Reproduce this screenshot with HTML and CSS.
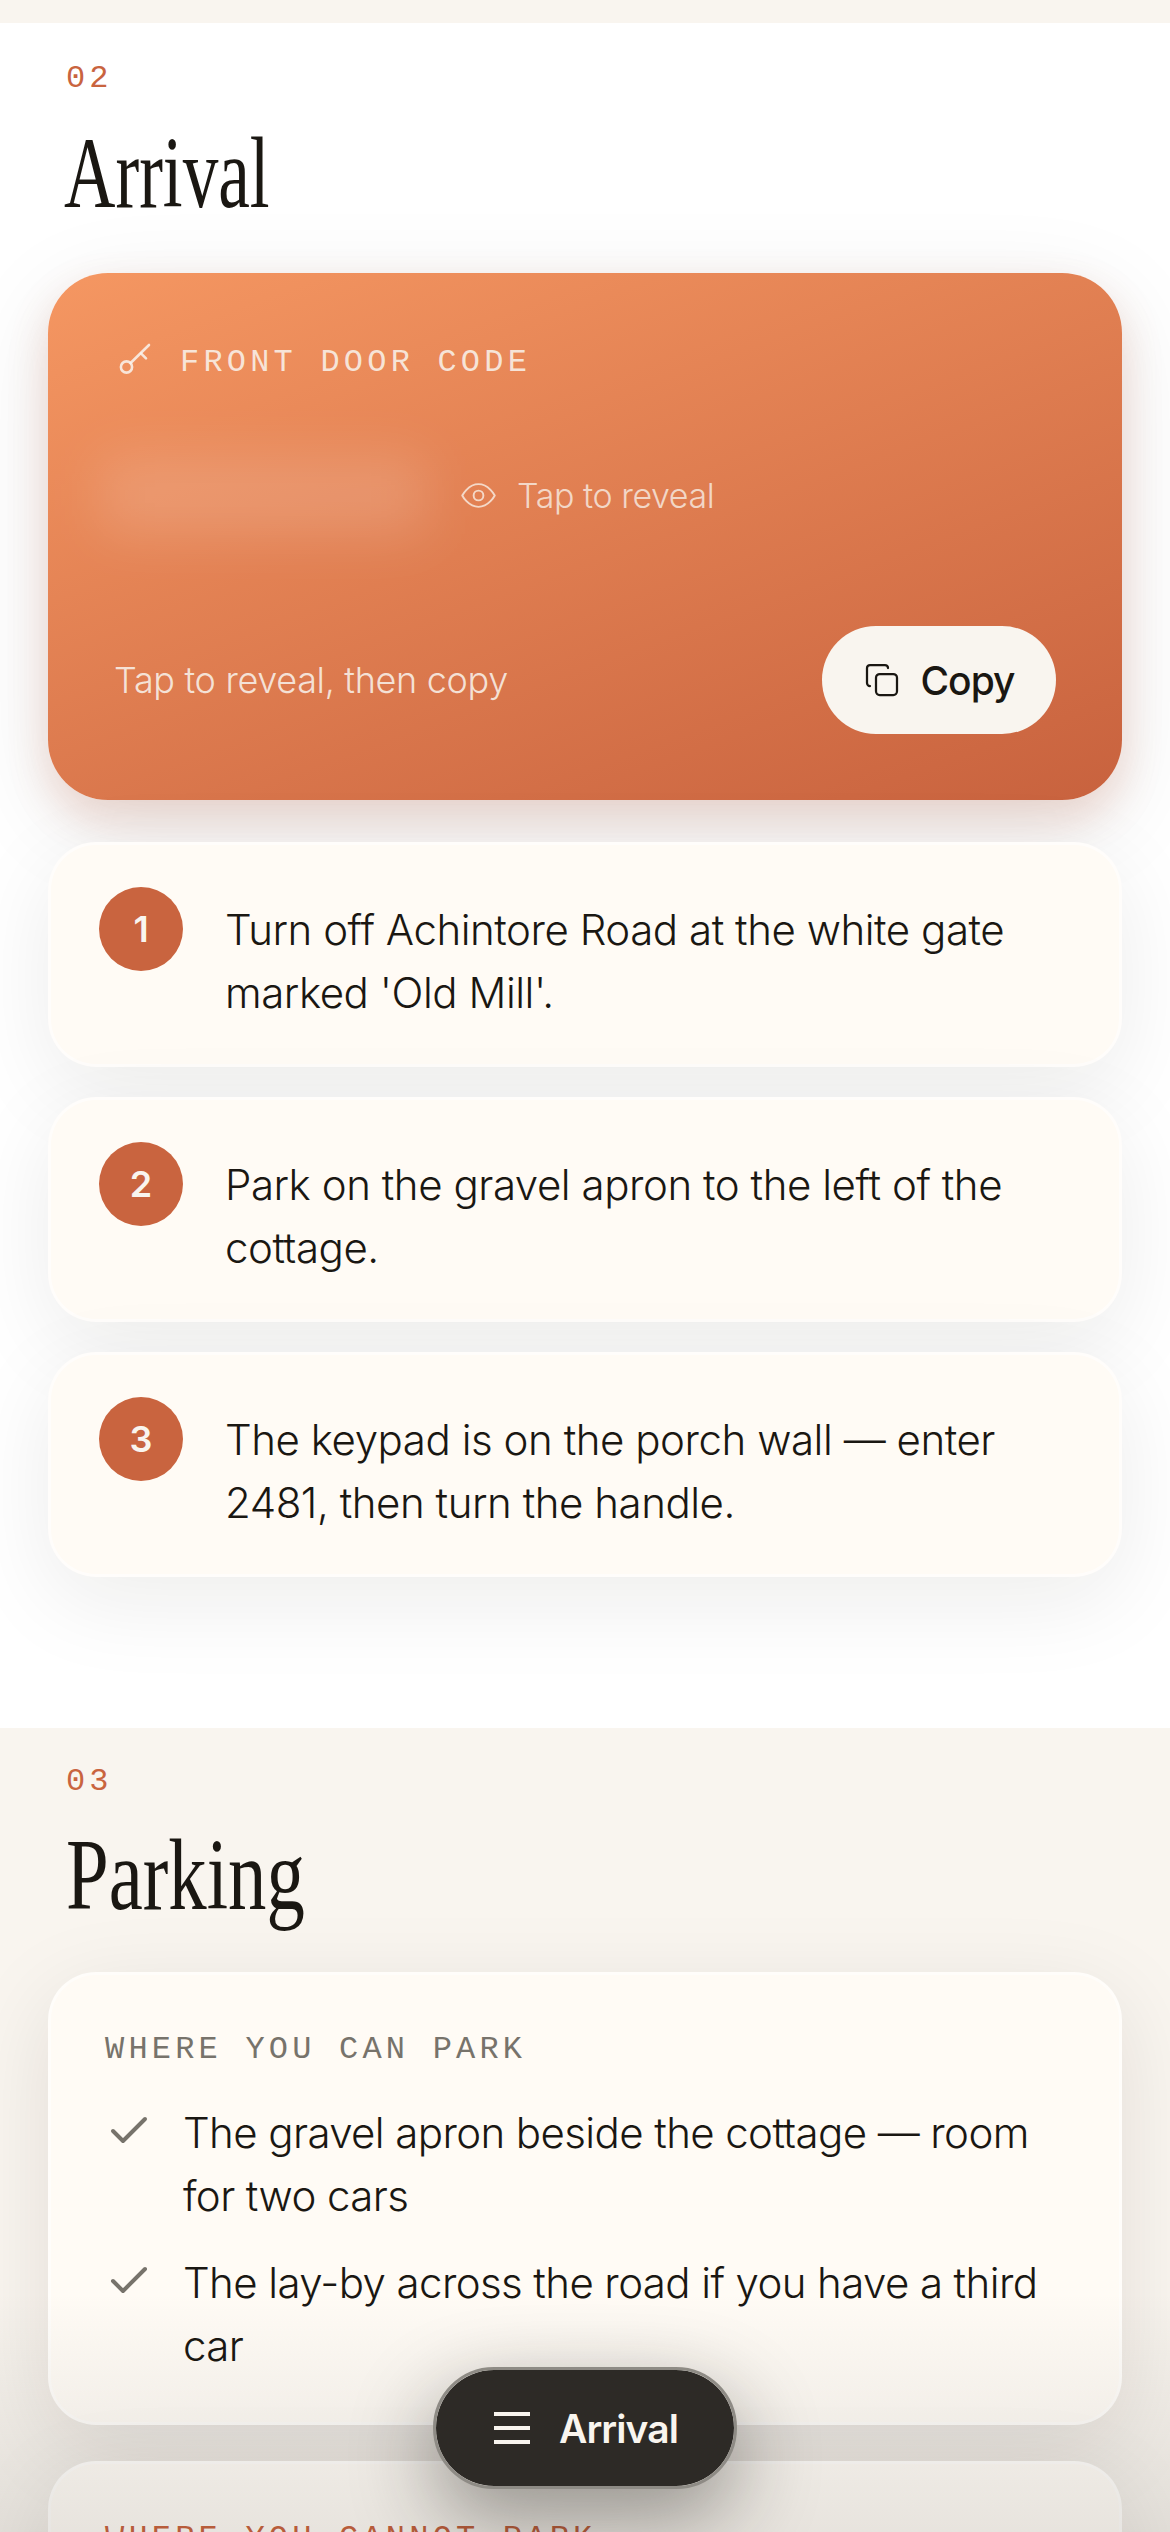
FILE: index.html
```html
<!DOCTYPE html>
<html lang="en">
<head>
<meta charset="utf-8">
<title>Arrival</title>
<link rel="stylesheet" href="styles.css">
</head>
<body>
<div class="page">
  <div class="topband"></div>
  <section class="section section-white">
    <div class="num">02</div>
    <h2 class="title title-arrival">Arrival</h2>
    <div class="hero">
      <div class="hero-label">
        <svg class="key" viewBox="0 0 36 36" fill="none" stroke="currentColor" stroke-width="2.6" stroke-linecap="round"><circle cx="9.500" cy="26" r="5.600"/><path d="M13.600 22 32 4"/><path d="M24 12.400l5 5"/></svg>
        <span>FRONT DOOR CODE</span>
      </div>
      <div class="code-row">
        <div class="code-blur"></div>
        <div class="reveal">
          <svg class="eye" viewBox="0 0 24 24" fill="none" stroke="currentColor" stroke-width="1.2" stroke-linecap="round" stroke-linejoin="round"><path d="M2 12s3.600-7 10-7 10 7 10 7-3.600 7-10 7-10-7-10-7Z"/><circle cx="12" cy="12" r="3"/></svg>
          <span>Tap to reveal</span>
        </div>
      </div>
      <div class="hero-foot">
        <span class="hint">Tap to reveal, then copy</span>
        <button class="copy">
          <svg class="copy-icon" viewBox="0 0 24 24" fill="none" stroke="currentColor" stroke-width="1.5" stroke-linecap="round" stroke-linejoin="round"><rect x="8" y="8" width="14" height="14" rx="2.500"/><path d="M4 16c-1.100 0-2-.9-2-2V4c0-1.100.9-2 2-2h10c1.100 0 2 .9 2 2"/></svg>
          <span>Copy</span>
        </button>
      </div>
    </div>
    <ol class="steps">
      <li class="step"><span class="badge">1</span><p>Turn off Achintore Road at the white gate marked 'Old Mill'.</p></li>
      <li class="step"><span class="badge">2</span><p>Park on the gravel apron to the left of the cottage.</p></li>
      <li class="step"><span class="badge">3</span><p>The keypad is on the porch wall — enter 2481, then turn the handle.</p></li>
    </ol>
  </section>
  <section class="section section-cream">
    <div class="num num-parking">03</div>
    <h2 class="title title-parking">Parking</h2>
    <div class="panel">
      <div class="panel-label">WHERE YOU CAN PARK</div>
      <ul class="checks">
        <li><svg class="check" viewBox="0 0 24 24" fill="none" stroke="currentColor" stroke-width="2" stroke-linecap="round" stroke-linejoin="round"><path d="M20 6 9 17l-5-5"/></svg><span>The gravel apron beside the cottage — room for two cars</span></li>
        <li><svg class="check" viewBox="0 0 24 24" fill="none" stroke="currentColor" stroke-width="2" stroke-linecap="round" stroke-linejoin="round"><path d="M20 6 9 17l-5-5"/></svg><span>The lay-by across the road if you have a third car</span></li>
      </ul>
    </div>
    <div class="panel panel-next">
      <div class="panel-label panel-label-warn">WHERE YOU CANNOT PARK</div>
    </div>
  </section>
  <div class="scrim"></div>
  <button class="pill">
    <svg class="menu" viewBox="0 0 36 36" fill="none" stroke="currentColor" stroke-width="4"><path d="M0 4h36M0 18h36M0 32h36"/></svg>
    <span>Arrival</span>
  </button>
</div>
</body>
</html>
```
FILE: styles.css
```css
* { box-sizing: border-box; }
html, body { margin: 0; padding: 0; background: #fff; }
body { font-family: Inter, "Noto Sans", sans-serif; color: #1a1712; }
.page { position: relative; width: 1170px; height: 2532px; overflow: hidden; }
.topband { height: 23px; background: #f9f5ef; }
.section { padding: 0 48px; }
.section-white { background: #fff; padding-bottom: 151px; }
.section-cream { background: #f9f5ef; padding-bottom: 60px; }
.num { font-family: "Liberation Mono", monospace; font-size: 32px; line-height: 45px; letter-spacing: 4px; color: #c9643f; padding: 33px 0 0 18px; }
.num-parking { padding-top: 31px; margin-bottom: 2px; }
.title { margin: 0 0 0 16px; font-family: "Liberation Serif", serif; font-weight: 400; font-size: 101px; line-height: 120px; height: 120px; margin-top: 12px; transform-origin: left center; color: #1a1712; white-space: nowrap; }
.title-arrival { transform: scaleX(.705); margin-bottom: 40px; }
.title-parking { transform: scaleX(.76); margin-left: 18px; margin-top: 11px; margin-bottom: 37px; }
.hero { height: 527px; border-radius: 60px; padding: 66px; background: linear-gradient(160deg, #f59762 0%, #c8623e 100%); box-shadow: 0 18px 42px rgba(201, 100, 63, .2), 0 24px 96px rgba(26, 23, 18, .1); display: flex; flex-direction: column; color: #f9f5ef; }
.hero-label { display: flex; align-items: center; gap: 27px; height: 45px; font-family: "Liberation Mono", monospace; font-size: 32px; letter-spacing: 4.2px; color: rgba(249, 245, 239, .85); margin-left: 3px; padding-top: 1px; }
.key { width: 36px; height: 36px; flex: none; margin-top: -6px; }
.code-row { display: flex; align-items: center; margin-top: 45px; height: 132px; }
.code-blur { width: 326px; height: 78px; margin-left: -14px; background: rgba(255, 255, 255, .15); filter: blur(27px); flex: none; margin-right: 33px; }
.reveal { display: flex; align-items: center; gap: 19px; font-size: 34px; letter-spacing: -.45px; font-weight: 300; color: rgba(249, 245, 239, .75); }
.eye { width: 39px; height: 39px; flex: none; }
.hero-foot { margin-top: auto; display: flex; align-items: center; justify-content: space-between; }
.hint { font-size: 36px; letter-spacing: -.33px; font-weight: 300; color: rgba(249, 245, 239, .85); }
.copy { height: 108px; width: 234px; border: 0; border-radius: 54px; background: #f9f5ef; color: #1a1712; display: flex; align-items: center; justify-content: center; gap: 21px; font-family: inherit; font-size: 39px; letter-spacing: -1px; font-weight: 500; padding: 0; }
.copy-icon { width: 36px; height: 36px; flex: none; }
.steps { list-style: none; margin: 42px 0 0; padding: 0; display: flex; flex-direction: column; gap: 30px; }
.step { display: flex; align-items: flex-start; gap: 42px; padding: 42px 48px 40px; background: #fffbf5; border: 3px solid rgba(255, 255, 255, .6); border-radius: 48px; box-shadow: 0 24px 90px rgba(26, 23, 18, .08); }
.badge { width: 84px; height: 84px; flex: none; border-radius: 50%; background: #c9643f; color: #f9f5ef; display: flex; align-items: center; justify-content: center; font-size: 36px; font-weight: 600; }
.step p { margin: 11px 0 0; font-size: 42px; line-height: 63px; letter-spacing: -.45px; font-weight: 330; }
.panel { background: #fffbf5; border: 3px solid rgba(255, 255, 255, .5); border-radius: 48px; padding: 52px 54px; box-shadow: 0 24px 90px rgba(26, 23, 18, .1); height: 453px; }
.panel-next { margin-top: 36px; }
.panel-label { font-family: "Liberation Mono", monospace; font-size: 32px; line-height: 45px; letter-spacing: 4.2px; color: #77736b; }
.panel-label-warn { color: #c9643f; }
.checks { list-style: none; margin: 29px 0 0; padding: 0; display: flex; flex-direction: column; gap: 24px; }
.checks li { display: flex; align-items: flex-start; gap: 30px; font-size: 42px; line-height: 63px; letter-spacing: -.6px; font-weight: 330; }
.check { width: 48px; height: 48px; flex: none; margin-top: 6px; color: #77736b; }
.scrim { position: absolute; left: 0; right: 0; bottom: 0; height: 240px; background: linear-gradient(to bottom, rgba(26, 23, 18, 0), rgba(26, 23, 18, .1)); pointer-events: none; }
.pill { position: absolute; left: 433px; top: 2367px; width: 304px; height: 122px; border: 3px solid #8e8b85; background-clip: padding-box; background-color: #2d2a26; border-radius: 61px; color: #f9f5ef; display: flex; align-items: center; justify-content: center; gap: 29px; font-family: inherit; font-size: 39px; letter-spacing: -.9px; font-weight: 600; box-shadow: 0 30px 84px rgba(26, 23, 18, .42); padding: 0 0 0 2px; }
.menu { width: 36px; height: 36px; flex: none; }
```
